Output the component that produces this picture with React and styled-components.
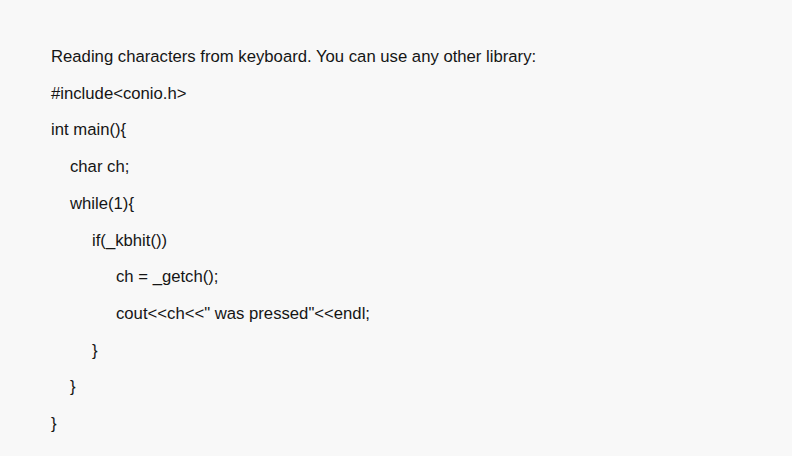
import styled, { createGlobalStyle } from 'styled-components';

const GlobalStyle = createGlobalStyle`
  html, body {
    margin: 0;
    padding: 0;
    background: #f8f8f8;
  }
`;

const Page = styled.div`
  min-height: 456px;
  box-sizing: border-box;
  padding: 39px 51px 0;
  background: #f8f8f8;
  font-family: 'Liberation Sans', Arial, sans-serif;
  font-size: 16.7px;
  color: #151515;
`;

const Line = styled.div`
  line-height: 36.7px;
  white-space: pre;
  padding-left: ${p => [0, 19, 41, 65][p.level || 0]}px;
`;

const lines = [
  [0, 'Reading characters from keyboard. You can use any other library:'],
  [0, '#include<conio.h>'],
  [0, 'int main(){'],
  [1, 'char ch;'],
  [1, 'while(1){'],
  [2, 'if(_kbhit())'],
  [3, 'ch = _getch();'],
  [3, 'cout<<ch<<" was pressed"<<endl;'],
  [2, '}'],
  [1, '}'],
  [0, '}'],
];

const App = () => (
  <>
    <GlobalStyle />
    <Page>
      {lines.map(([level, text], i) => (
        <Line key={i} level={level}>
          {text}
        </Line>
      ))}
    </Page>
  </>
);

export default App;
